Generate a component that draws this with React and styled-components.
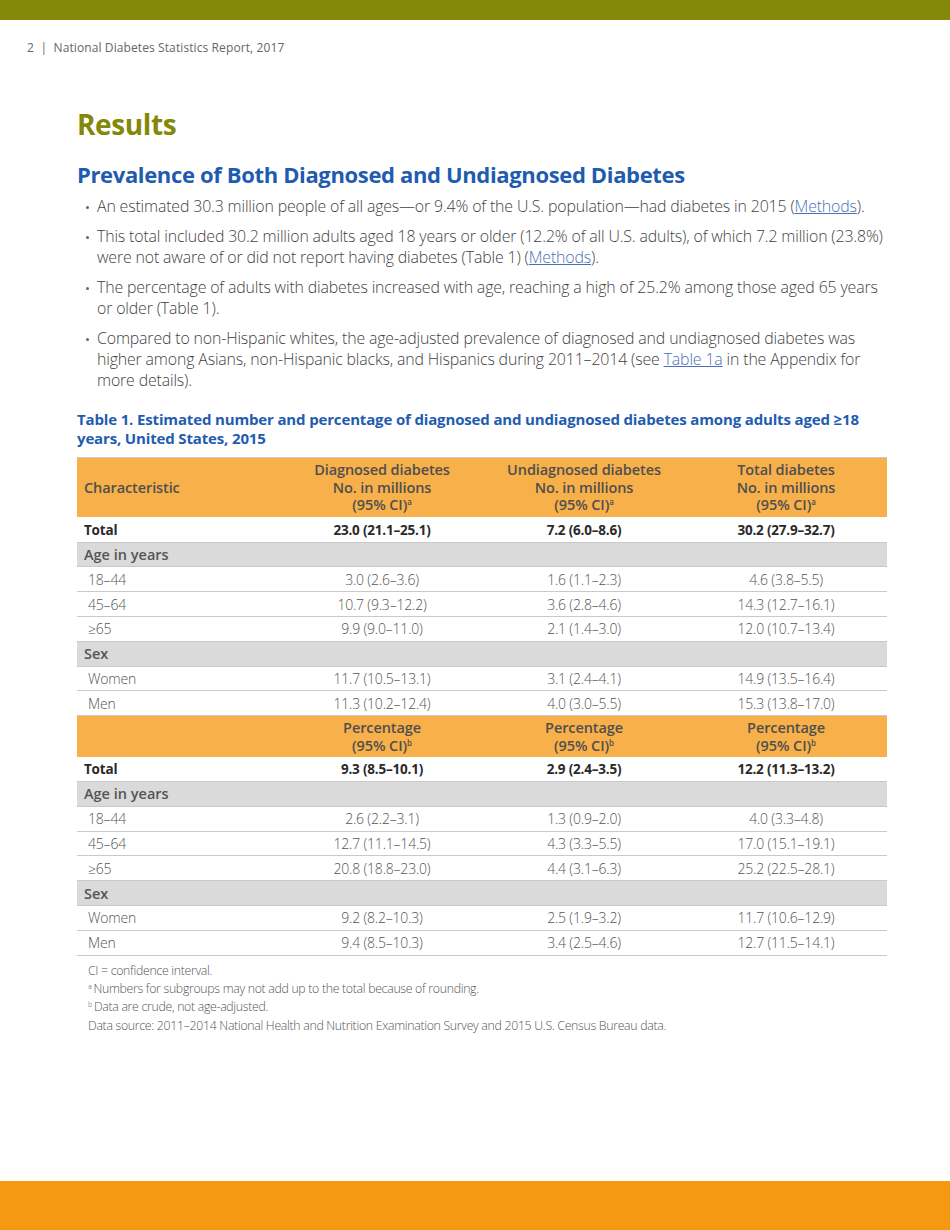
import React from 'react'
import styled, { createGlobalStyle } from 'styled-components'

const GlobalStyle = createGlobalStyle`
   html, body { margin: 0; padding: 0; background: #fff; }
   body { font-family: "Open Sans", "Liberation Sans", sans-serif; color: #444; }
`

const Page = styled.div`
   width: 950px;
   height: 1230px;
   display: flex;
   flex-direction: column;
   overflow: hidden;
`

const TopBar = styled.div`
   height: 20px;
   background: #838808;
   flex-shrink: 0;
`

const RunningHead = styled.div`
   padding: 19px 0 0 27px;
   font-size: 12px;
   color: #666;
   letter-spacing: 0.1px;
   height: 36px;
   box-sizing: border-box;
`

const Content = styled.main`
   flex: 1;
   padding: 0 63px 0 77px;
`

const Title = styled.h1`
   margin: 48px 0 0;
   font-size: 28px;
   font-weight: 700;
   color: #838808;
   line-height: 40px;
   letter-spacing: -0.4px;
`

const Subtitle = styled.h2`
   margin: 16px 0 0;
   font-size: 22px;
   font-weight: 700;
   color: #1f5cb0;
   line-height: 28px;
   letter-spacing: -0.35px;
`

const Bullets = styled.ul`
   list-style: none;
   margin: 8px 0 0;
   padding: 0 0 0 9px;
`

const Bullet = styled.li`
   position: relative;
   padding-left: 11px;
   margin-bottom: 9.5px;
   font-size: 15.9px;
   font-weight: 300;
   line-height: 20.8px;
   color: #3f3f3f;
   letter-spacing: -0.15px;

   &::before {
      content: '';
      position: absolute;
      left: 0;
      top: 10px;
      width: 3px;
      height: 3px;
      border-radius: 50%;
      background: #666;
   }
`

const Link = styled.a`
   color: #4a6fb5;
   text-decoration: underline;
`

const Caption = styled.div`
   margin-top: 19px;
   font-size: 15px;
   font-weight: 700;
   color: #1f5cb0;
   line-height: 19px;
   letter-spacing: -0.15px;
`

const Table = styled.table`
   margin-top: 9px;
   width: 810px;
   border-collapse: collapse;
   table-layout: fixed;
   border-top: 1px solid #c9c9c9;
`

const HeadRow = styled.tr`
   background: #f7b04a;
   height: ${p => p.$h}px;
`

const HeadCell = styled.th`
   font-size: 14.5px;
   font-weight: 600;
   color: #4f4f4f;
   line-height: 17.5px;
   letter-spacing: -0.1px;
   text-align: ${p => (p.$left ? 'left' : 'center')};
   padding: ${p => (p.$left ? '0 0 0 7px' : '0')};
   vertical-align: middle;

   sup {
      font-size: 8px;
      vertical-align: 5px;
      line-height: 0;
   }
`

const Row = styled.tr`
   height: 24.8px;
   background: ${p => (p.$section ? '#dadada' : '#fff')};
   border-bottom: 1px solid #c9c9c9;
`

const Cell = styled.td`
   font-size: ${p => (p.$bold ? '13.5px' : '14px')};
   font-weight: ${p => (p.$bold ? 700 : 300)};
   color: ${p => (p.$bold ? '#2a2a2a' : '#555')};
   text-align: ${p => (p.$left ? 'left' : 'center')};
   padding: 0 0 0 ${p => (p.$left ? (p.$bold ? '7px' : '11px') : '0')};
   letter-spacing: -0.2px;
`

const SectionCell = styled.td`
   font-size: 14.5px;
   font-weight: 600;
   color: #555;
   padding-left: 7px;
`

const Notes = styled.div`
   margin-top: 6px;
   padding-left: 11px;
   font-size: 12.3px;
   font-weight: 300;
   color: #555;
   line-height: 18.4px;
   letter-spacing: -0.3px;

   sup {
      font-size: 7px;
      vertical-align: 4px;
      line-height: 0;
      margin-right: 2px;
   }
`

const BottomBar = styled.div`
   height: 49px;
   background: #f59812;
   flex-shrink: 0;
`

const counts = [
   { section: 'Age in years' },
   { label: '18–44', v: ['3.0 (2.6–3.6)', '1.6 (1.1–2.3)', '4.6 (3.8–5.5)'] },
   { label: '45–64', v: ['10.7 (9.3–12.2)', '3.6 (2.8–4.6)', '14.3 (12.7–16.1)'] },
   { label: '≥65', v: ['9.9 (9.0–11.0)', '2.1 (1.4–3.0)', '12.0 (10.7–13.4)'] },
   { section: 'Sex' },
   { label: 'Women', v: ['11.7 (10.5–13.1)', '3.1 (2.4–4.1)', '14.9 (13.5–16.4)'] },
   { label: 'Men', v: ['11.3 (10.2–12.4)', '4.0 (3.0–5.5)', '15.3 (13.8–17.0)'] },
]

const percents = [
   { section: 'Age in years' },
   { label: '18–44', v: ['2.6 (2.2–3.1)', '1.3 (0.9–2.0)', '4.0 (3.3–4.8)'] },
   { label: '45–64', v: ['12.7 (11.1–14.5)', '4.3 (3.3–5.5)', '17.0 (15.1–19.1)'] },
   { label: '≥65', v: ['20.8 (18.8–23.0)', '4.4 (3.1–6.3)', '25.2 (22.5–28.1)'] },
   { section: 'Sex' },
   { label: 'Women', v: ['9.2 (8.2–10.3)', '2.5 (1.9–3.2)', '11.7 (10.6–12.9)'] },
   { label: 'Men', v: ['9.4 (8.5–10.3)', '3.4 (2.5–4.6)', '12.7 (11.5–14.1)'] },
]

function Rows({ rows }) {
   return rows.map((r, i) =>
      r.section ? (
         <Row key={i} $section>
            <SectionCell colSpan={4}>{r.section}</SectionCell>
         </Row>
      ) : (
         <Row key={i}>
            <Cell $left>{r.label}</Cell>
            {r.v.map(v => (
               <Cell key={v}>{v}</Cell>
            ))}
         </Row>
      )
   )
}

function TotalRow({ values }) {
   return (
      <Row>
         <Cell $left $bold>Total</Cell>
         {values.map(v => (
            <Cell $bold key={v}>{v}</Cell>
         ))}
      </Row>
   )
}

export default function App() {
   return (
      <Page>
         <GlobalStyle />
         <TopBar />
         <RunningHead>2&nbsp; |&nbsp; National Diabetes Statistics Report, 2017</RunningHead>
         <Content>
            <Title>Results</Title>
            <Subtitle>Prevalence of Both Diagnosed and Undiagnosed Diabetes</Subtitle>
            <Bullets>
               <Bullet>
                  An estimated 30.3 million people of all ages—or 9.4% of the U.S. population—had diabetes in 2015 (<Link>Methods</Link>).
               </Bullet>
               <Bullet>
                  This total included 30.2 million adults aged 18 years or older (12.2% of all U.S. adults), of which 7.2 million (23.8%) were not aware of or did not report having diabetes (Table 1) (<Link>Methods</Link>).
               </Bullet>
               <Bullet>
                  The percentage of adults with diabetes increased with age, reaching a high of 25.2% among those aged 65 years or older (Table 1).
               </Bullet>
               <Bullet>
                  Compared to non-Hispanic whites, the age-adjusted prevalence of diagnosed and undiagnosed diabetes was higher among Asians, non-Hispanic blacks, and Hispanics during 2011–2014 (see <Link>Table 1a</Link> in the Appendix for more details).
               </Bullet>
            </Bullets>
            <Caption>
               Table 1. Estimated number and percentage of diagnosed and undiagnosed diabetes among adults aged ≥18 years, United States, 2015
            </Caption>
            <Table>
               <colgroup>
                  <col style={{ width: 204 }} />
                  <col style={{ width: 202 }} />
                  <col style={{ width: 202 }} />
                  <col style={{ width: 202 }} />
               </colgroup>
               <tbody>
                  <HeadRow $h={60}>
                     <HeadCell $left>Characteristic</HeadCell>
                     <HeadCell>Diagnosed diabetes<br />No. in millions<br />(95% CI)<sup>a</sup></HeadCell>
                     <HeadCell>Undiagnosed diabetes<br />No. in millions<br />(95% CI)<sup>a</sup></HeadCell>
                     <HeadCell>Total diabetes<br />No. in millions<br />(95% CI)<sup>a</sup></HeadCell>
                  </HeadRow>
                  <TotalRow values={['23.0 (21.1–25.1)', '7.2 (6.0–8.6)', '30.2 (27.9–32.7)']} />
                  <Rows rows={counts} />
                  <HeadRow $h={41}>
                     <HeadCell $left />
                     <HeadCell>Percentage<br />(95% CI)<sup>b</sup></HeadCell>
                     <HeadCell>Percentage<br />(95% CI)<sup>b</sup></HeadCell>
                     <HeadCell>Percentage<br />(95% CI)<sup>b</sup></HeadCell>
                  </HeadRow>
                  <TotalRow values={['9.3 (8.5–10.1)', '2.9 (2.4–3.5)', '12.2 (11.3–13.2)']} />
                  <Rows rows={percents} />
               </tbody>
            </Table>
            <Notes>
               <div>CI = confidence interval.</div>
               <div><sup>a</sup>Numbers for subgroups may not add up to the total because of rounding.</div>
               <div><sup>b</sup>Data are crude, not age-adjusted.</div>
               <div>Data source: 2011–2014 National Health and Nutrition Examination Survey and 2015 U.S. Census Bureau data.</div>
            </Notes>
         </Content>
         <BottomBar />
      </Page>
   )
}
